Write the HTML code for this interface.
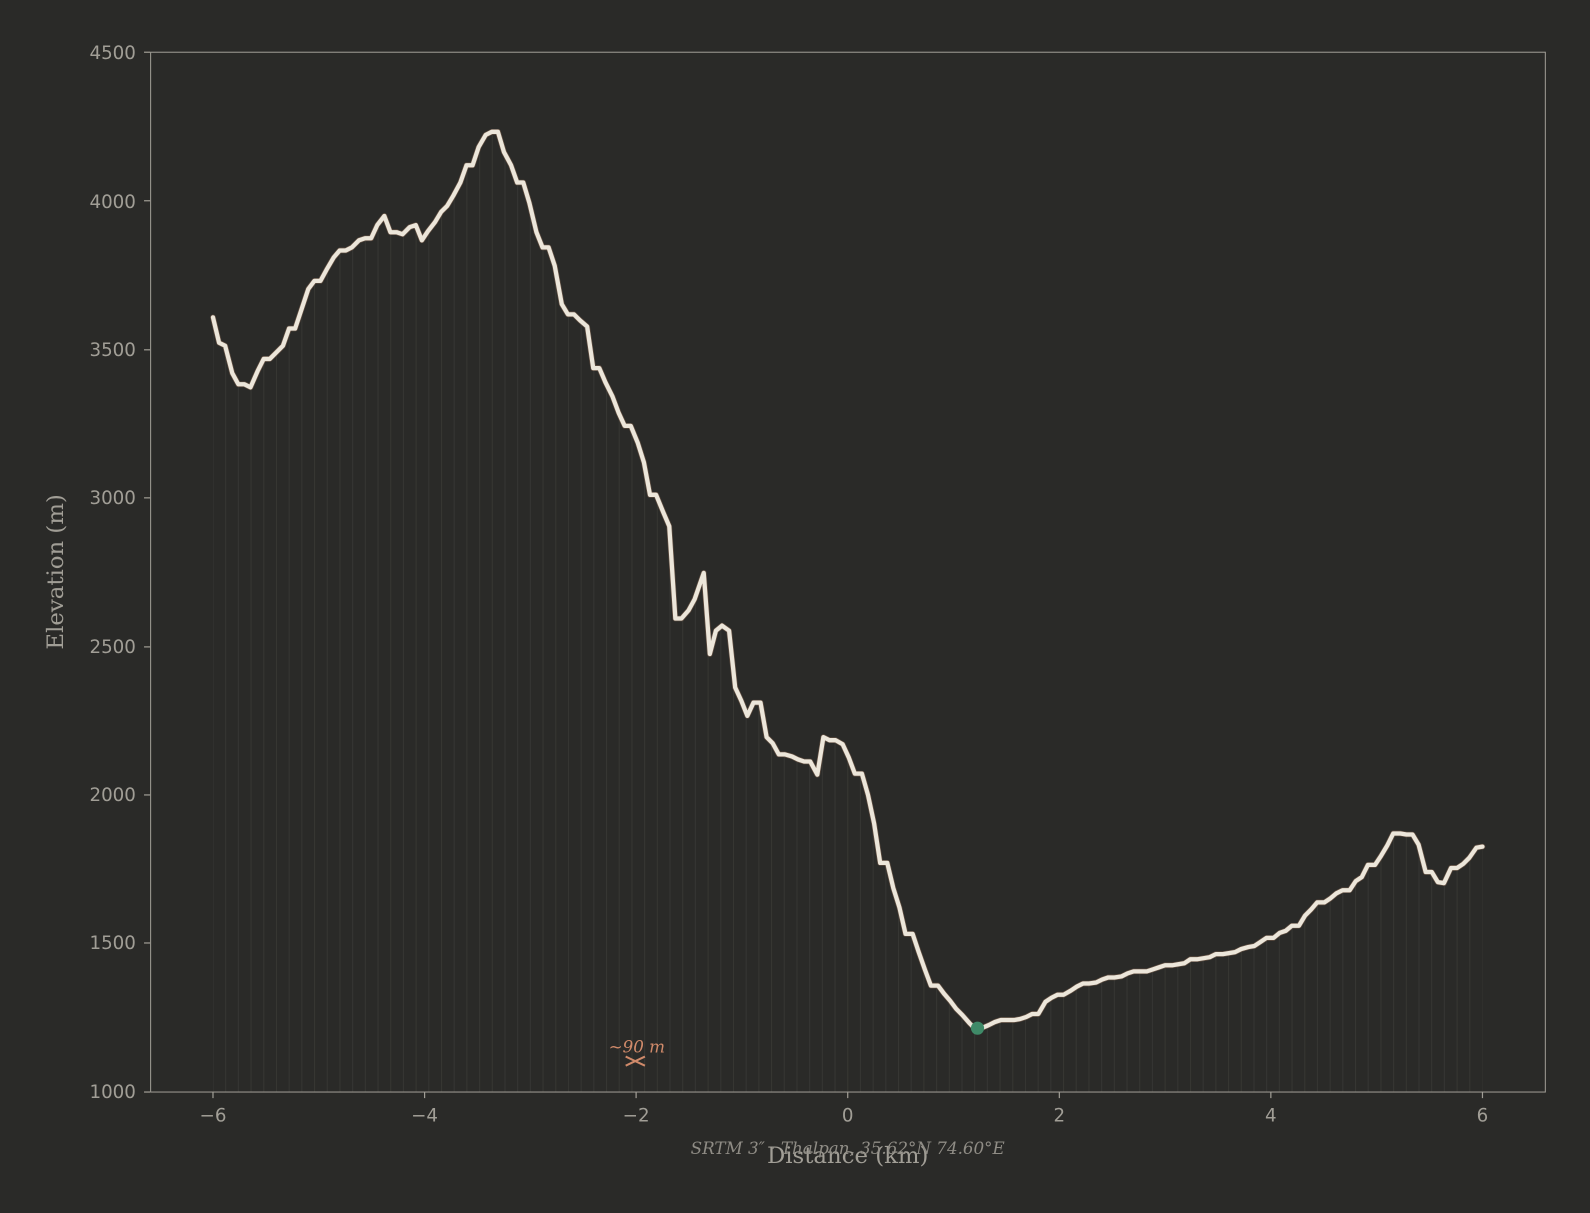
<!DOCTYPE html>
<html><head><meta charset="utf-8"><style>
html,body{margin:0;padding:0;background:#2a2a28;}
svg{display:block}
</style></head><body>
<svg width="1590" height="1213" viewBox="0 0 1568 1196.3" xmlns="http://www.w3.org/2000/svg">
<defs>
<pattern id="vl" patternUnits="userSpaceOnUse" x="209.5" y="0" width="12.52" height="10">
<rect x="0" y="0" width="1" height="10" fill="#363633"/>
</pattern>
<clipPath id="area"><path d="M210,313 L216,338 L222,341 L229,368 L235,379 L241,379 L247,382 L254,366 L260,354 L266,354 L272,348 L279,341 L285,324 L291,324 L297,306 L304,285 L310,277 L316,277 L322,266 L329,254 L335,247 L341,247 L347,244 L354,237 L360,235 L366,235 L372,222 L379,213 L385,229 L391,229 L397,231 L404,224 L410,222 L416,237 L422,228 L429,219 L435,209 L441,203 L447,193 L454,180 L460,163 L466,163 L472,145 L479,133 L485,130 L491,130 L497,150 L504,163 L510,180 L516,180 L522,200 L529,229 L535,244 L541,244 L547,262 L554,300 L560,310 L566,310 L572,316 L579,322 L585,363 L591,363 L597,377 L604,391 L610,407 L616,420 L622,420 L629,437 L635,456 L641,488 L647,488 L654,505 L660,519 L666,610 L672,610 L679,602 L685,591 L694,565 L700,645 L706,622 L712,617 L719,622 L725,678 L731,691 L737,706 L743,693 L750,693 L756,727 L762,733 L768,744 L774,744 L781,746 L787,749 L793,751 L799,751 L806,764 L812,727 L818,730 L824,730 L831,734 L837,747 L843,763 L850,763 L856,784 L862,812 L868,851 L875,851 L881,876 L887,895 L893,921 L900,921 L906,939 L912,956 L918,972 L925,972 L931,980 L937,987 L943,995 L949,1001 L956,1009 L962,1015 L968,1014 L975,1011 L981,1008 L987,1006 L993,1006 L1000,1006 L1006,1005 L1012,1003 L1018,1000 L1024,1000 L1031,988 L1037,984 L1043,981 L1049,981 L1056,977 L1062,973 L1068,970 L1074,970 L1081,969 L1087,966 L1093,964 L1099,964 L1106,963 L1112,960 L1118,958 L1124,958 L1131,958 L1137,956 L1143,954 L1149,952 L1156,952 L1162,951 L1168,950 L1174,946 L1181,946 L1187,945 L1193,944 L1199,941 L1206,941 L1212,940 L1218,939 L1224,936 L1231,934 L1237,933 L1243,929 L1249,925 L1256,925 L1262,920 L1268,918 L1274,913 L1281,913 L1287,903 L1293,897 L1299,890 L1306,890 L1312,886 L1318,881 L1324,878 L1331,878 L1337,869 L1343,865 L1349,853 L1356,853 L1362,844 L1368,834 L1374,822 L1381,822 L1387,823 L1393,823 L1399,833 L1406,860 L1412,860 L1418,870 L1424,871 L1431,856 L1437,856 L1443,852 L1449,846 L1456,836 L1462,835 L1462,1077 L210,1077 Z"/></clipPath>
<path id="prof" d="M210,313 L216,338 L222,341 L229,368 L235,379 L241,379 L247,382 L254,366 L260,354 L266,354 L272,348 L279,341 L285,324 L291,324 L297,306 L304,285 L310,277 L316,277 L322,266 L329,254 L335,247 L341,247 L347,244 L354,237 L360,235 L366,235 L372,222 L379,213 L385,229 L391,229 L397,231 L404,224 L410,222 L416,237 L422,228 L429,219 L435,209 L441,203 L447,193 L454,180 L460,163 L466,163 L472,145 L479,133 L485,130 L491,130 L497,150 L504,163 L510,180 L516,180 L522,200 L529,229 L535,244 L541,244 L547,262 L554,300 L560,310 L566,310 L572,316 L579,322 L585,363 L591,363 L597,377 L604,391 L610,407 L616,420 L622,420 L629,437 L635,456 L641,488 L647,488 L654,505 L660,519 L666,610 L672,610 L679,602 L685,591 L694,565 L700,645 L706,622 L712,617 L719,622 L725,678 L731,691 L737,706 L743,693 L750,693 L756,727 L762,733 L768,744 L774,744 L781,746 L787,749 L793,751 L799,751 L806,764 L812,727 L818,730 L824,730 L831,734 L837,747 L843,763 L850,763 L856,784 L862,812 L868,851 L875,851 L881,876 L887,895 L893,921 L900,921 L906,939 L912,956 L918,972 L925,972 L931,980 L937,987 L943,995 L949,1001 L956,1009 L962,1015 L968,1014 L975,1011 L981,1008 L987,1006 L993,1006 L1000,1006 L1006,1005 L1012,1003 L1018,1000 L1024,1000 L1031,988 L1037,984 L1043,981 L1049,981 L1056,977 L1062,973 L1068,970 L1074,970 L1081,969 L1087,966 L1093,964 L1099,964 L1106,963 L1112,960 L1118,958 L1124,958 L1131,958 L1137,956 L1143,954 L1149,952 L1156,952 L1162,951 L1168,950 L1174,946 L1181,946 L1187,945 L1193,944 L1199,941 L1206,941 L1212,940 L1218,939 L1224,936 L1231,934 L1237,933 L1243,929 L1249,925 L1256,925 L1262,920 L1268,918 L1274,913 L1281,913 L1287,903 L1293,897 L1299,890 L1306,890 L1312,886 L1318,881 L1324,878 L1331,878 L1337,869 L1343,865 L1349,853 L1356,853 L1362,844 L1368,834 L1374,822 L1381,822 L1387,823 L1393,823 L1399,833 L1406,860 L1412,860 L1418,870 L1424,871 L1431,856 L1437,856 L1443,852 L1449,846 L1456,836 L1462,835"/>
</defs>
<rect width="1568" height="1196.3" fill="#2a2a28"/>
<rect x="200" y="120" width="1275" height="957" fill="url(#vl)" clip-path="url(#area)"/>
<rect x="148.5" y="51.5" width="1375.5" height="1025.5" fill="none" stroke="#a19e96" stroke-width="1"/>
<g stroke="#a19e96" stroke-width="1.2">
<line x1="142" y1="51.5" x2="148" y2="51.5"/><line x1="142" y1="198" x2="148" y2="198"/><line x1="142" y1="345" x2="148" y2="345"/><line x1="142" y1="491" x2="148" y2="491"/><line x1="142" y1="638" x2="148" y2="638"/><line x1="142" y1="784" x2="148" y2="784"/><line x1="142" y1="930" x2="148" y2="930"/><line x1="142" y1="1077" x2="148" y2="1077"/>
<line x1="210" y1="1077" x2="210" y2="1083"/><line x1="418.7" y1="1077" x2="418.7" y2="1083"/><line x1="627.3" y1="1077" x2="627.3" y2="1083"/><line x1="836" y1="1077" x2="836" y2="1083"/><line x1="1044.7" y1="1077" x2="1044.7" y2="1083"/><line x1="1253.3" y1="1077" x2="1253.3" y2="1083"/><line x1="1462" y1="1077" x2="1462" y2="1083"/>
</g>
<g font-family="'DejaVu Sans',sans-serif" font-size="18" fill="#a19e96" text-anchor="end">
<text x="134" y="58">4500</text><text x="134" y="205">4000</text><text x="134" y="351">3500</text><text x="134" y="497">3000</text><text x="134" y="644">2500</text><text x="134" y="790">2000</text><text x="134" y="936">1500</text><text x="134" y="1083">1000</text>
</g>
<g font-family="'DejaVu Sans',sans-serif" font-size="18" fill="#a19e96" text-anchor="middle">
<text x="210" y="1106">−6</text><text x="418.7" y="1106">−4</text><text x="627.3" y="1106">−2</text><text x="836" y="1106">0</text><text x="1044.7" y="1106">2</text><text x="1253.3" y="1106">4</text><text x="1462" y="1106">6</text>
</g>
<text x="836" y="1147" font-family="'DejaVu Serif',serif" font-size="22.5" fill="#a19e96" text-anchor="middle">Distance (km)</text>
<text transform="translate(62,564) rotate(-90)" font-family="'DejaVu Serif',serif" font-size="22.5" fill="#a19e96" text-anchor="middle">Elevation (m)</text>
<text x="836" y="1138" font-family="'DejaVu Serif',serif" font-style="italic" font-size="16.5" fill="#8f8c85" text-anchor="middle">SRTM 3″ · Thalpan, 35.62°N 74.60°E</text>
<text x="628" y="1038" font-family="'DejaVu Serif',serif" font-style="italic" font-size="16.5" fill="#d08a6a" text-anchor="middle">~90 m</text>
<g stroke="#d08a6a" stroke-width="2"><line x1="617" y1="1042" x2="636" y2="1051"/><line x1="617" y1="1051" x2="636" y2="1042"/></g>
<use href="#prof" fill="none" stroke="#8a6a55" stroke-opacity="0.6" stroke-width="5.5" stroke-linejoin="round" stroke-linecap="round"/>
<use href="#prof" fill="none" stroke="#ece6da" stroke-width="4.2" stroke-linejoin="round" stroke-linecap="round"/>
<circle cx="964" cy="1014" r="6.5" fill="#3f8a68"/>
</svg>
</body></html>
